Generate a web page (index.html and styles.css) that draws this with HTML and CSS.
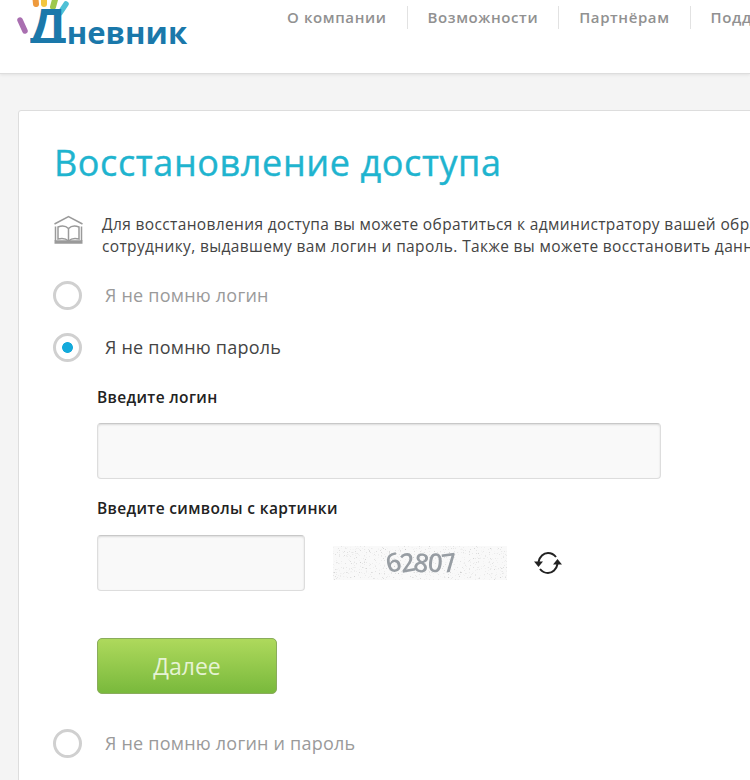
FILE: index.html
```html
<!DOCTYPE html>
<html lang="ru">
<head>
	<meta charset="utf-8" />
	<title>Восстановление доступа</title>
	<link rel="stylesheet" href="styles.css">
</head>
<body>
	<header class="top">
		<a class="logo" href="#">
			<svg class="logo-hand" width="62" height="46" viewBox="0 0 62 46">
				<path d="M3 20 L8 31" stroke="#a96fb0" stroke-width="5.5" stroke-linecap="round" />
				<path d="M18 -6 L19 4" stroke="#ee9a3c" stroke-width="6" stroke-linecap="round" />
				<path d="M27 -6 L27 4" stroke="#f2c63f" stroke-width="6" stroke-linecap="round" />
				<path d="M39 -4 L36 7" stroke="#9ec84c" stroke-width="6" stroke-linecap="round" />
				<path d="M49 4 L43 13" stroke="#4fc0d6" stroke-width="5.5" stroke-linecap="round" />
			</svg>
			<span class="logo-text"><span class="logo-first">Д</span>невник</span>
		</a>
		<nav class="menu">
			<a href="#">О компании</a>
			<a href="#">Возможности</a>
			<a href="#">Партнёрам</a>
			<a href="#">Поддержка</a>
		</nav>
	</header>

	<main class="card">
		<h1>Восстановление доступа</h1>

		<div class="intro">
			<svg class="intro-icon" width="31" height="30" viewBox="0 0 31 30" fill="none" stroke="#9a9a9a" stroke-width="1.5">
				<path d="M1.500 9 L15.500 1.500 L29.500 9" />
				<path d="M2.500 11.500 L2.500 26 M28.500 11.500 L28.500 26" />
				<path d="M5 12 C9 10.500 13 11 15.500 13.500 C18 11 22 10.500 26 12 L26 24 C22 23 18 23.500 15.500 26 C13 23.500 9 23 5 24 Z" />
				<path d="M15.500 13.500 L15.500 26" />
				<path d="M1.500 27 L29.500 27" stroke-width="3.500" />
			</svg>
			<p>Для восстановления доступа вы можете обратиться к администратору вашей образовательной организации или<br>сотруднику, выдавшему вам логин и пароль. Также вы можете восстановить данные самостоятельно.</p>
		</div>

		<label class="choice">
			<input type="radio" name="mode">
			<span>Я не помню логин</span>
		</label>

		<label class="choice active">
			<input type="radio" name="mode" checked>
			<span>Я не помню пароль</span>
		</label>

		<form class="fields">
			<label class="field-label" for="login">Введите логин</label>
			<input class="text-input wide" id="login" type="text">

			<label class="field-label" for="code">Введите символы с картинки</label>
			<div class="captcha-row">
				<input class="text-input short" id="code" type="text">
				<svg class="captcha" width="174" height="34" viewBox="0 0 174 34">
					<defs>
						<filter id="noise" x="0" y="0" width="100%" height="100%">
							<feTurbulence type="fractalNoise" baseFrequency="0.8" numOctaves="2" seed="7" />
							<feColorMatrix type="matrix" values="0 0 0 0 0.6  0 0 0 0 0.6  0 0 0 0 0.6  4 0 0 0 -2.450" />
							<feGaussianBlur stdDeviation="0.4" />
						</filter>
						<filter id="soft"><feGaussianBlur stdDeviation="0.7" /></filter>
					</defs>
					<rect width="174" height="34" fill="#f9f9f9" />
					<rect width="174" height="34" filter="url(#noise)" />
					<g class="captcha-code" filter="url(#soft)">
						<text x="53" y="26" transform="rotate(-16 60 17)">6</text>
						<text x="67" y="26" transform="rotate(-10 74 17)">2</text>
						<text x="81" y="26" transform="rotate(10 88 17)">8</text>
						<text x="95" y="26" transform="rotate(6 102 17)">0</text>
						<text x="109" y="26" transform="rotate(-8 116 17)">7</text>
					</g>
				</svg>
				<svg class="refresh" width="30" height="28" viewBox="0 0 30 28" fill="none" stroke="#222" stroke-width="2">
					<path d="M5.500 13 C6.500 7.500 10.500 4 15 4 C18.500 4 21 5.500 23 8" />
					<path d="M24.500 15 C23.500 20.500 19.500 24 15 24 C11.500 24 9 22.500 7 20" />
					<path d="M1 12.500 L10 12.500 L5.500 18 Z" fill="#222" stroke="none" />
					<path d="M20 15.500 L29 15.500 L24.500 10 Z" fill="#222" stroke="none" />
				</svg>
			</div>

			<button class="next" type="button">Далее</button>
		</form>

		<label class="choice">
			<input type="radio" name="mode">
			<span>Я не помню логин и пароль</span>
		</label>
	</main>
</body>
</html>
```
FILE: styles.css
```css
html, body {
	height: 780px;
	overflow: hidden;
}

body {
	margin: 0;
	background-color: #f4f4f4;
	font-family: 'Open Sans', 'Noto Sans', sans-serif;
	color: #444444;
}

a {
	text-decoration: none;
}

/* Header
 * ====== */

.top {
	display: flex;
	height: 74px;
	box-sizing: border-box;
	background-color: #ffffff;
	border-bottom: 1px solid #dddddd;
	box-shadow: 0 1px 3px rgba(0, 0, 0, 0.08);
	white-space: nowrap;
}

.logo {
	position: relative;
	display: block;
	width: 287px;
	flex: none;
}

.logo-hand {
	position: absolute;
	left: 17px;
	top: 0;
	overflow: hidden;
}

.logo-text {
	position: absolute;
	left: 30px;
	top: 0;
	font-family: 'Open Sans', sans-serif;
	font-weight: 700;
	font-size: 31px;
	line-height: 52px;
	color: #1a78aa;
}

.logo-first {
	display: inline-block;
	font-size: 48px;
	/* the logo's first letter has no feet */
	clip-path: inset(0 0 9px 0);
}

.menu {
	display: flex;
	align-items: flex-start;
	padding-top: 6px;
}

.menu a {
	padding-right: 20px;
	margin-right: 20px;
	border-right: 1px solid #e2e2e2;
	font-size: 15px;
	line-height: 23px;
	font-weight: 600;
	letter-spacing: 0.6px;
	color: #919191;
}

.menu a:last-child {
	border-right: 0;
}

/* Card
 * ==== */

.card {
	width: 900px;
	margin: 36px 0 0 18px;
	padding: 0 0 0 35px;
	box-sizing: border-box;
	height: 700px;
	background-color: #ffffff;
	border: 1px solid #dddddd;
	border-radius: 3px;
	white-space: nowrap;
}

h1 {
	margin: 27px 0 0;
	font-size: 36px;
	line-height: 50px;
	font-weight: 400;
	letter-spacing: 0.6px;
	-webkit-text-stroke: 0.4px #1fb4cf;
	color: #1fb4cf;
}

.intro {
	display: flex;
	margin-top: 25px;
}

.intro-icon {
	margin: 2px 18px 0 -1px;
	flex: none;
}

.intro p {
	margin: 0;
	font-size: 15.500px;
	line-height: 22px;
	letter-spacing: 0.36px;
	color: #444444;
}

.choice {
	display: flex;
	align-items: center;
	gap: 23px;
	height: 30px;
	font-size: 18px;
	letter-spacing: 0.22px;
	color: #9a9a9a;
	margin-top: 22px;
}

.choice.active {
	color: #444444;
}

.intro + .choice {
	margin-top: 23px;
}

.choice input {
	appearance: none;
	width: 29px;
	height: 29px;
	margin: 0 0 0 -1px;
	border: 3px solid #d0d0d0;
	border-radius: 50%;
	background-color: #ffffff;
	flex: none;
}

.choice input:checked {
	background-image: radial-gradient(circle, #14aadb 0, #14aadb 5px, transparent 5.800px);
}

/* Form
 * ==== */

.fields {
	display: flex;
	flex-direction: column;
	align-items: flex-start;
	padding: 6px 0 0 43px;
}

.field-label {
	margin-top: 18px;
	font-size: 15.500px;
	line-height: 22px;
	font-weight: 600;
	letter-spacing: 0.35px;
	color: #222222;
}

.text-input {
	display: block;
	box-sizing: border-box;
	height: 56px;
	margin: 15px 0 0;
	padding: 0 10px;
	background-color: #f9f9f9;
	border: 1px solid #dddddd;
	border-top-color: #c8c8c8;
	border-radius: 4px;
	box-shadow: inset 0 1px 2px rgba(0, 0, 0, 0.12);
}

.text-input.wide {
	width: 564px;
}

.text-input.short {
	width: 208px;
}

.captcha-row {
	display: flex;
	align-items: center;
	margin-top: 16px;
}

.captcha-row .text-input {
	margin: 0;
}

.captcha {
	margin-left: 28px;
	margin-right: 26px;
}

.captcha-code text {
	font-family: 'Open Sans', sans-serif;
	font-size: 26px;
	font-weight: 600;
	fill: #979da3;
}

.next {
	width: 180px;
	height: 56px;
	margin-top: 47px;
	background-color: #8fc74b;
	background-image: linear-gradient(to bottom, #aed95c, #79b93c);
	border: 1px solid #8aac5c;
	border-radius: 5px;
	font-family: 'Open Sans', sans-serif;
	font-size: 23px;
	color: #e6f3d4;
}

.fields + .choice {
	margin-top: 34px;
}
```
